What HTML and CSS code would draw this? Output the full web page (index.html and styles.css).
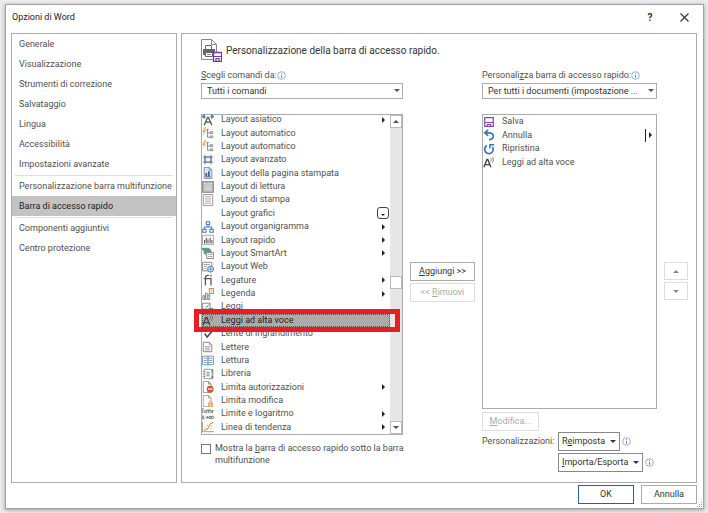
FILE: index.html
```html
<!DOCTYPE html>
<html lang="it">
<head>
  <meta charset="UTF-8">
  <meta name="viewport" content="width=device-width, initial-scale=1.0">
  <title>Opzioni di Word</title>
  <link rel="stylesheet" href="styles.css">
</head>
<body>

  <svg class="sprite" aria-hidden="true">
    <symbol id="i-info" viewBox="0 0 9 9"><circle cx="4.500" cy="4.500" r="3.800" fill="none" stroke="#7f9db9" stroke-width=".8"/><path d="M4.500 4v2.800M4.500 2.100v1" stroke="#5b88b5"/></symbol>
    <symbol id="i-voice" viewBox="0 0 14 14"><path d="M1 13 4.600 4h1L9.200 13M2.300 10h5.500" fill="none" stroke="#444" stroke-width="1.600"/><path d="M9 2.500q1.600 2 0 4M11 1q2.600 3.500 0 7" fill="none" stroke="#666" stroke-width=".9"/></symbol>
    <symbol id="i-auto" viewBox="0 0 14 14"><path d="M3 0 0 6h2L1 10l4-6H3l2-4z" fill="#f0b25c"/><path d="M5 3h3M6.500 3v9H9M6.500 7H9" fill="none" stroke="#777"/><path d="M9.500 5.500h3v2h-3zM9.500 10.500h3v2h-3z" fill="#fff" stroke="#777"/></symbol>
    <symbol id="i-save" viewBox="0 0 14 14"><path d="M2 2h10v10H2z" fill="#fff" stroke="#7a4aa0" stroke-width="1.400"/><path d="M2 7.500h10M5 12V9.800h4V12" fill="none" stroke="#7a4aa0" stroke-width="1.200"/></symbol>
  </svg>

  <div class="dialog" role="dialog" aria-labelledby="title">
    <header class="titlebar">
      <h1 id="title">Opzioni di Word</h1>
      <button class="title-btn help" aria-label="Guida">?</button>
      <button class="title-btn" aria-label="Chiudi">
        <svg width="9" height="9" viewBox="0 0 9 9"><path d="M.5.5l8 8M8.500.5l-8 8" stroke="#333" stroke-width="1.100"/></svg>
      </button>
    </header>

    <div class="content">
      <nav class="sidebar">
        <a href="#">Generale</a>
        <a href="#">Visualizzazione</a>
        <a href="#">Strumenti di correzione</a>
        <a href="#">Salvataggio</a>
        <a href="#">Lingua</a>
        <a href="#">Accessibilità</a>
        <a href="#">Impostazioni avanzate</a>
        <hr>
        <a href="#">Personalizzazione barra multifunzione</a>
        <a href="#" class="active" aria-current="page">Barra di accesso rapido</a>
        <hr>
        <a href="#">Componenti aggiuntivi</a>
        <a href="#">Centro protezione</a>
      </nav>

      <main class="panel">
        <div class="heading">
          <svg width="21" height="23" viewBox="0 0 21 23">
            <path d="M.5.5h10l5 5v15H.5z" fill="#fff" stroke="#888"/><path d="M10.500.5v5h5" fill="none" stroke="#888"/>
            <path d="M4.500 10V6.500h6V10" fill="#fff" stroke="#666"/><path d="M2 10h12v6H2z" fill="#666"/><path d="M4.500 13.500h7v4h-7z" fill="#fff" stroke="#666"/><path d="M6 15.500h4" stroke="#888"/>
            <path d="M12.500 13.500h8v9h-8z" fill="#fff" stroke="#6b3fa0" stroke-width="1.300"/><path d="M12.500 17.500h8M15 22v-2.500h3V22" fill="none" stroke="#6b3fa0" stroke-width="1.200"/>
          </svg>
          <h2>Personalizzazione della barra di accesso rapido.</h2>
        </div>

        <div class="columns">
          <section class="col">
            <div class="label"><label for="source"><u>S</u>cegli comandi da:</label><svg class="info"><use href="#i-info"/></svg></div>
            <div class="select">
              <select id="source"><option>Tutti i comandi</option></select>
            </div>

            <div class="list">
              <ul class="commands" role="listbox" aria-label="Comandi">
                <li role="option"><svg viewBox="0 0 14 14"><path d="M2.500 13 6.500 4h1l4 9M4 9.500h6" fill="none" stroke="#555" stroke-width="1.500"/><path d="M0 3l3-2.500v5zM14 3l-3-2.500v5zM3 3h2M9 3h2" fill="#3a72b5" stroke="#3a72b5" stroke-width=".7"/></svg>Layout asiatico<i class="more"></i></li>
                <li role="option"><svg><use href="#i-auto"/></svg>Layout automatico</li>
                <li role="option"><svg><use href="#i-auto"/></svg>Layout automatico</li>
                <li role="option"><svg viewBox="0 0 14 14"><path d="M3.500 3.500h7v6h-7z" fill="#eef2f8" stroke="#5c6f8c"/><path d="M3.500 1v11M10.500 1v11M1 3.500h12M1 9.500h12" stroke="#5c6f8c"/></svg>Layout avanzato</li>
                <li role="option"><svg viewBox="0 0 14 14"><path d="M2.500.5h6l3 3v10h-9z" fill="#dce5f3" stroke="#7385a3"/><path d="M8.500.5v3h3" fill="none" stroke="#7385a3"/><path d="M4 7h2v4H4zM7 5h2v6H7z" fill="#375a94"/><path d="M4 11.500h6" stroke="#375a94"/></svg>Layout della pagina stampata</li>
                <li role="option"><svg viewBox="0 0 14 14"><path d="M1 1h12v12H1z" fill="#eee" stroke="#777" stroke-width="1.500"/><path d="M3.500 3.500h7v7h-7zM5 5.500h4M5 7.500h4" fill="none" stroke="#888" stroke-width=".8"/></svg>Layout di lettura</li>
                <li role="option"><svg viewBox="0 0 14 14"><path d="M1.500.5h11v13h-11z" fill="#fff" stroke="#888"/><path d="M3.500 3h7M3.500 5h7M3.500 7h7M3.500 9h7M3.500 11h7" stroke="#999" stroke-width=".8"/></svg>Layout di stampa</li>
                <li role="option"><svg></svg>Layout grafici<i class="gallery"></i></li>
                <li role="option"><svg viewBox="0 0 14 14"><path d="M5 1h4v3.500H5zM.8 9.500h4v3.500h-4zM9.200 9.500h4v3.500h-4z" fill="#fff" stroke="#4576b8" stroke-width="1.200"/><path d="M7 4.500V7M2.800 9.500V7h8.400v2.500" fill="none" stroke="#4576b8" stroke-width="1.200"/></svg>Layout organigramma<i class="more"></i></li>
                <li role="option"><svg viewBox="0 0 14 14"><path d="M.5 1.500h13v11H.5z" fill="#fff" stroke="#999"/><path d="M3 11V7M5 11V4M7 11V6M9.500 11V4M11.500 11V7" stroke="#555" stroke-width="1.200"/></svg>Layout rapido<i class="more"></i></li>
                <li role="option"><svg viewBox="0 0 14 14"><path d="M0 1h8l3 3v2H5v4L3 8H2V5L0 3z" fill="#5a9a83"/><path d="M5.500 6.500h8v7h-8z" fill="#fff" stroke="#777"/><path d="M7 8.500h1M9 8.500h3M7 11h1M9 11h3" stroke="#777"/></svg>Layout SmartArt<i class="more"></i></li>
                <li role="option"><svg viewBox="0 0 14 14"><path d="M.5 1.500h11v10H.5z" fill="#fff" stroke="#777"/><path d="M2 4h7M2 6.500h4M2 9h3" stroke="#888"/><circle cx="10" cy="9.500" r="3.500" fill="#d9e8f7" stroke="#4576b8"/><path d="M6.500 9.500h7M10 6v7" stroke="#4576b8" stroke-width=".7"/></svg>Layout Web</li>
                <li role="option"><svg viewBox="0 0 14 14"><path d="M4 13V4q0-2.500 3-2.500h1M2 5.500h8.500V13M10.500 1v2" fill="none" stroke="#555" stroke-width="1.500"/></svg>Legature<i class="more"></i></li>
                <li role="option"><svg viewBox="0 0 14 14"><path d="M1 9h2v4.500H1zM4 6h2v7.500H4zM7 8h2v5.500H7z" fill="#fff" stroke="#777"/><path d="M8.500.5h5v6h-5z" fill="#fff" stroke="#e08a45" stroke-width="1.200"/><path d="M10 2.500h2M10 4.500h2" stroke="#e08a45"/></svg>Legenda<i class="more"></i></li>
                <li role="option"><svg viewBox="0 0 14 14"><path d="M.5 2.500h9v7h-9z" fill="#fff" stroke="#777"/><path d="M2 9l3 3.500V9M4 7h2l2-3" fill="none" stroke="#666"/><path d="M8 8h5v5H8z" fill="#5a9a83"/></svg>Leggi</li>
                <li role="option" aria-selected="true" class="selected"><svg><use href="#i-voice"/></svg>Leggi ad alta voce<span class="highlight"></span></li>
                <li role="option"><svg viewBox="0 0 14 14"><path d="M3 6.500l3 4 6-7" fill="none" stroke="#444" stroke-width="1.700"/></svg>Lente di ingrandimento</li>
                <li role="option"><svg viewBox="0 0 14 14"><path d="M1.500 1.500h7l3 3v8h-10z" fill="#fff" stroke="#777"/><path d="M8.500 1.500v3h3M3.500 6.500h6M3.500 8.500h6M3.500 10.500h6" fill="none" stroke="#888" stroke-width=".9"/></svg>Lettere</li>
                <li role="option"><svg viewBox="0 0 14 14"><path d="M.5 2.500h6.500v10H.5zM7 2.500h6.500v10H7z" fill="#fff" stroke="#6488b8"/><path d="M2 5h3.500M2 7.500h3.500M2 10h3.500M8.500 5H12M8.500 7.500H12M8.500 10H12" stroke="#6488b8"/></svg>Lettura</li>
                <li role="option"><svg viewBox="0 0 14 14"><path d="M2.500 1.500h10v11h-10z" fill="#fff" stroke="#888"/><path d="M5 5h4M5 7h4M5 9h4" stroke="#4d9279"/><path d="M1 4h3M1 7h3M1 10h3" stroke="#999"/><path d="M11 2h2v3h-2z" fill="#4d9279"/><path d="M11 5.500h2v3h-2z" fill="#e0a03c"/><path d="M11 9h2v3h-2z" fill="#4576b8"/></svg>Libreria</li>
                <li role="option"><svg viewBox="0 0 14 14"><path d="M1.500.5h6l3 3v10h-9z" fill="#fff" stroke="#888"/><path d="M7.500.5v3h3" fill="none" stroke="#888"/><circle cx="9.500" cy="9.500" r="4" fill="#d9532c"/><path d="M7 9.500h5" stroke="#fff" stroke-width="1.500"/></svg>Limita autorizzazioni<i class="more"></i></li>
                <li role="option"><svg viewBox="0 0 14 14"><path d="M1.500.5h6l3 3v10h-9z" fill="#fff" stroke="#999"/><path d="M7.500.5v3h3" fill="none" stroke="#999"/><path d="M7 9h6v5H7z" fill="#e9ae6b"/><path d="M8.500 9V7.500q1.500-2 3 0V9" fill="none" stroke="#e9ae6b"/><path d="M10 10.500v2" stroke="#fff"/></svg>Limita modifica</li>
                <li role="option"><svg viewBox="0 0 14 14"><path d="M1 0v6M3.500 2v4M5.500 6V2.500h5V6M8 2.500V6M12 6V3h1.500" fill="none" stroke="#555"/><path d="M1 8.500v5M1 11l2-2M1 11l2 2.500M4 11h3M6 9.500 7.500 11 6 12.500" fill="none" stroke="#555" stroke-width=".9"/><circle cx="9.300" cy="11" r="1.400" fill="none" stroke="#555"/><circle cx="12.200" cy="11" r="1.400" fill="none" stroke="#555"/></svg>Limite e logaritmo<i class="more"></i></li>
                <li role="option"><svg viewBox="0 0 14 14"><path d="M.5 1v11.500H14" fill="none" stroke="#888"/><path d="M2 10.500q5-.5 6-4t5-5" fill="none" stroke="#e08a45" stroke-width="1.300"/><path d="M3 7h1M6 5h1M10 9h1M11 6h1" stroke="#777"/></svg>Linea di tendenza<i class="more"></i></li>
              </ul>
              <div class="scrollbar">
                <button class="scroll-btn" aria-label="Scorri su"><i class="up"></i></button>
                <span class="track-top"></span>
                <span class="thumb"></span>
                <span class="track-bottom"></span>
                <button class="scroll-btn" aria-label="Scorri giù"><i class="down"></i></button>
              </div>
            </div>

            <div class="check">
              <input type="checkbox" id="below">
              <label for="below">Mostra la <u>b</u>arra di accesso rapido sotto la barra<br>multifunzione</label>
            </div>
          </section>

          <div class="transfer">
            <button class="btn"><span><u>A</u>ggiungi &gt;&gt;</span></button>
            <button class="btn" disabled><span>&lt;&lt; <u>R</u>imuovi</span></button>
          </div>

          <section class="col">
            <div class="label"><label for="target">Personali<u>z</u>za barra di accesso rapido:</label><svg class="info"><use href="#i-info"/></svg></div>
            <div class="select">
              <select id="target"><option>Per tutti i documenti (impostazione ...</option></select>
            </div>

            <div class="list">
              <ul class="toolbar-items" role="listbox" aria-label="Barra di accesso rapido">
                <li role="option"><svg><use href="#i-save"/></svg>Salva</li>
                <li role="option"><svg viewBox="0 0 14 14"><path d="M6 1 2 4.500 6 8M2 4.500h6q4 .3 4 4t-5 4" fill="none" stroke="#3a72b5" stroke-width="1.900"/></svg>Annulla<i class="split"></i></li>
                <li role="option"><svg viewBox="0 0 14 14"><path d="M4.500 3A5 5 0 1 0 11 4.500" fill="none" stroke="#3a72b5" stroke-width="1.900"/><path d="M8 6.500V2h5" fill="none" stroke="#3a72b5" stroke-width="1.700"/></svg>Ripristina</li>
                <li role="option"><svg><use href="#i-voice"/></svg>Leggi ad alta voce</li>
              </ul>
            </div>

            <button class="btn modify" disabled><span><u>M</u>odifica...</span></button>
            <div class="custom">
              <span>Personalizzazioni:</span>
              <div class="custom-row">
                <button class="btn strong"><span>R<u>e</u>imposta</span><i class="down"></i></button>
                <svg class="info"><use href="#i-info"/></svg>
              </div>
              <div class="custom-row">
                <button class="btn strong"><span><u>I</u>mporta/Esporta</span><i class="down"></i></button>
                <svg class="info"><use href="#i-info"/></svg>
              </div>
            </div>
          </section>

          <div class="order">
            <button class="btn" aria-label="Sposta su" disabled><i class="up"></i></button>
            <button class="btn" aria-label="Sposta giù" disabled><i class="down"></i></button>
          </div>
        </div>
      </main>
    </div>

    <footer class="footer">
      <button class="btn primary">OK</button>
      <button class="btn">Annulla</button>
    </footer>
    <svg class="grip" width="6" height="6" viewBox="0 0 6 6"><path d="M4 0h1v1H4zM2 2h1v1H2zM4 2h1v1H4zM0 4h1v1H0zM2 4h1v1H2zM4 4h1v1H4z" fill="#999"/></svg>
  </div>

</body>
</html>
```
FILE: styles.css
```css
* {
  box-sizing: border-box;
}

body {
  margin: 0;
  padding: 4px 4px 4px 5px;
  min-height: 100vh;
  display: flex;
  background: #ececec;
  font-family: Roboto, "Open Sans", sans-serif;
  font-size: 9px;
  line-height: 13px;
  color: #505050;
}

button,
select,
input {
  font: inherit;
  color: inherit;
  margin: 0;
}

h1,
h2,
ul {
  margin: 0;
  padding: 0;
  font-weight: normal;
}

u {
  text-underline-offset: 1px;
}

.sprite {
  position: absolute;
  width: 0;
  height: 0;
}

.dialog {
  position: relative;
  flex: 1;
  display: flex;
  flex-direction: column;
  background: #fff;
  border: 1px solid #a3a3a3;
  box-shadow: 0 1px 4px #999;
}

/* title bar */
.titlebar {
  display: flex;
  align-items: center;
  height: 28px;
  padding: 0 7px 4px 6px;
  color: #222;
}

.titlebar h1 {
  flex: 1;
  font-size: 9px;
}

.title-btn {
  display: flex;
  align-items: center;
  justify-content: center;
  width: 24px;
  height: 20px;
  padding: 0;
  border: 0;
  background: none;
}

.title-btn.help {
  margin-right: 10px;
  font-size: 10px;
  font-weight: 600;
}

.content {
  flex: 1;
  display: flex;
  gap: 4px;
  padding: 0 6px 0 5px;
}

/* sidebar */
.sidebar {
  width: 166px;
  border: 1px solid #ababab;
}

.sidebar a {
  display: block;
  padding: 0 7px;
  line-height: 20px;
  white-space: nowrap;
  color: #505050;
  text-decoration: none;
}

.sidebar a.active {
  background: #c3c3c3;
  color: #222;
}

.sidebar hr {
  height: 2px;
  margin: 0 3px;
  border: 0;
  border-bottom: 1px solid #ddd;
}

/* main panel */
.panel {
  flex: 1;
  display: flex;
  flex-direction: column;
  padding: 5px 8px 10px 19px;
  border: 1px solid #ababab;
}

.heading {
  display: flex;
  align-items: center;
  gap: 4px;
}

.heading h2 {
  font-size: 10px;
  color: #333;
}

.columns {
  flex: 1;
  display: grid;
  grid-template-columns: 202fr 65px 175fr 24px;
  column-gap: 7px;
  padding-top: 7px;
}

.col {
  display: flex;
  flex-direction: column;
  min-width: 0;
}

.label {
  display: flex;
  align-items: center;
  white-space: nowrap;
}

.info {
  width: 9px;
  height: 9px;
  flex: none;
}

.select {
  position: relative;
  margin: 1px 0 15px;
}

.select select {
  display: block;
  width: 100%;
  height: 16px;
  padding: 0 14px 0 5px;
  border: 1px solid #ababab;
  border-radius: 0;
  background: #fff;
  color: #333;
  appearance: none;
}

.select::after {
  content: "";
  position: absolute;
  right: 3px;
  top: 6px;
  border: 3px solid transparent;
  border-top-color: #555;
  border-bottom: 0;
}

.list {
  flex: 1;
  display: flex;
  border: 1px solid #ababab;
}

.list ul {
  flex: 1;
  display: grid;
  list-style: none;
}

.list li {
  position: relative;
  display: flex;
  align-items: center;
  gap: 7px;
  min-height: 0;
  white-space: nowrap;
}

.list li svg {
  width: 12px;
  height: 12px;
  flex: none;
}

/* first row is scrolled slightly out of the box */
.commands {
  grid-auto-rows: 1fr;
  margin-top: -2px;
}

.toolbar-items {
  grid-auto-rows: 1fr;
  align-self: flex-start;
  height: 54px;
}

.list .selected {
  background: #ababab;
  color: #222;
  outline: 1px dotted #555;
  outline-offset: -1px;
}

.highlight {
  position: absolute;
  inset: -5px -10px -5px -8px;
  z-index: 1;
  border: 5px solid #e81c23;
}

.more {
  margin-left: auto;
  margin-right: 5px;
  border: 3px solid transparent;
  border-left-color: #222;
  border-right: 0;
}

.split {
  display: flex;
  align-items: center;
  height: 13px;
  margin-left: auto;
  margin-right: 4px;
  padding-left: 3px;
  border-left: 1px solid #222;
}

.split::after,
.gallery::after {
  content: "";
  border: 3px solid transparent;
  border-left-color: #222;
  border-right: 0;
}

.gallery {
  display: flex;
  align-items: flex-end;
  justify-content: center;
  width: 12px;
  height: 12px;
  margin-left: auto;
  margin-right: 1px;
  padding-bottom: 2px;
  border: 1px solid #444;
  border-radius: 3px;
}

.gallery::after {
  border: 2px solid transparent;
  border-top-color: #222;
  border-bottom: 0;
}

.up,
.down {
  border: 3px solid transparent;
}

.up {
  border-bottom-color: currentColor;
  border-top: 0;
}

.down {
  border-top-color: currentColor;
  border-bottom: 0;
}

.scrollbar {
  display: flex;
  flex-direction: column;
  width: 12px;
  background: #e6e6e6;
}

.scroll-btn,
.thumb {
  display: flex;
  align-items: center;
  justify-content: center;
  flex: none;
  height: 13px;
  padding: 0;
  border: 1px solid #bbb;
  background: #fff;
}

.track-top {
  flex: 149;
}

.track-bottom {
  flex: 132;
}

.check {
  display: flex;
  gap: 4px;
  margin-top: 7px;
  padding-bottom: 6px;
  line-height: 12px;
  white-space: nowrap;
}

.check input {
  flex: none;
  width: 10px;
  height: 10px;
  margin-top: 2px;
  border: 1px solid #777;
  background: #fff;
  appearance: none;
}

/* buttons */
.btn {
  display: flex;
  align-items: center;
  justify-content: center;
  gap: 5px;
  height: 19px;
  padding: 0 3px;
  border: 1px solid #ababab;
  border-radius: 0;
  background: #fff;
  color: #333;
  white-space: nowrap;
}

.btn:disabled {
  border-color: #ddd;
  color: #aaa;
}

.transfer,
.order {
  display: flex;
  flex-direction: column;
  gap: 2px;
  padding-top: 193px;
}

.order .btn {
  height: 18px;
  color: #888;
}

.modify {
  align-self: flex-start;
  width: 57px;
  margin: 3px 0 1px;
}

.custom {
  display: grid;
  grid-template-columns: 76px 1fr;
  align-items: center;
  row-gap: 2px;
}

.custom-row {
  grid-column: 2;
  display: flex;
  align-items: center;
  gap: 2px;
}

.btn.strong {
  border-color: #888;
}

.footer {
  display: flex;
  justify-content: flex-end;
  gap: 7px;
  padding: 2px 6px 4px;
}

.footer .btn {
  width: 56px;
}

.btn.primary {
  border: 1px solid #2b5f9e;
}

.grip {
  position: absolute;
  right: 0;
  bottom: 0;
}
```
